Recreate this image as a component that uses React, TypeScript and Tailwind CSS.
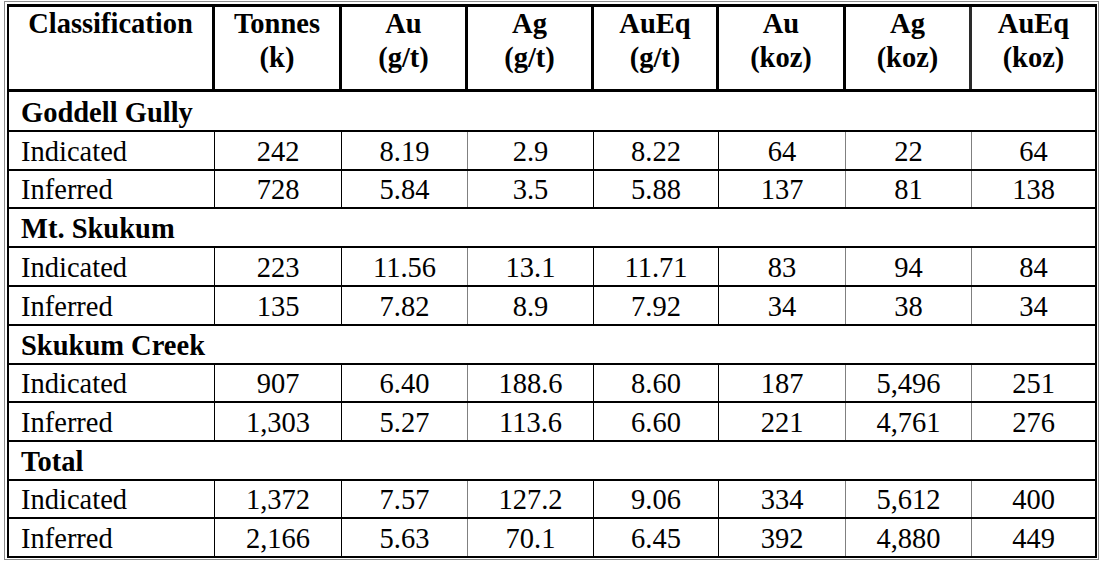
import React from "react";

const GRID = "grid grid-cols-[206px_127px_126px_126px_125px_127px_126px_123px]";

const headers: [string, string][] = [
  ["Classification", ""],
  ["Tonnes", "(k)"],
  ["Au", "(g/t)"],
  ["Ag", "(g/t)"],
  ["AuEq", "(g/t)"],
  ["Au", "(koz)"],
  ["Ag", "(koz)"],
  ["AuEq", "(koz)"],
];

const headerBorders = [
  "border-r-[3px] border-black",
  "border-r-[3px] border-black",
  "border-r-[3px] border-black",
  "border-r-[3px] border-black",
  "border-r-[3px] border-black",
  "border-r-[3px] border-black",
  "border-r-[3px] border-[#2a2a2a]",
  "",
];

const dataBorders = [
  "border-r border-black",
  "border-r border-black",
  "border-r border-[#808080]",
  "border-r border-black",
  "border-r border-black",
  "border-r border-[#808080]",
  "border-r border-[#808080]",
  "",
];

const sections = [
  {
    name: "Goddell Gully",
    rows: [
      ["Indicated", "242", "8.19", "2.9", "8.22", "64", "22", "64"],
      ["Inferred", "728", "5.84", "3.5", "5.88", "137", "81", "138"],
    ],
  },
  {
    name: "Mt. Skukum",
    rows: [
      ["Indicated", "223", "11.56", "13.1", "11.71", "83", "94", "84"],
      ["Inferred", "135", "7.82", "8.9", "7.92", "34", "38", "34"],
    ],
  },
  {
    name: "Skukum Creek",
    rows: [
      ["Indicated", "907", "6.40", "188.6", "8.60", "187", "5,496", "251"],
      ["Inferred", "1,303", "5.27", "113.6", "6.60", "221", "4,761", "276"],
    ],
  },
  {
    name: "Total",
    rows: [
      ["Indicated", "1,372", "7.57", "127.2", "9.06", "334", "5,612", "400"],
      ["Inferred", "2,166", "5.63", "70.1", "6.45", "392", "4,880", "449"],
    ],
  },
];

const heights = [
  "h-[38px]",
  "h-[39px]",
  "h-[38px]",
  "h-[39px]",
  "h-[39px]",
  "h-[39px]",
  "h-[39px]",
  "h-[38px]",
  "h-[39px]",
  "h-[39px]",
  "h-[38px]",
  "h-[39px]",
];

export default function App() {
  let idx = 0;
  const rows: React.ReactNode[] = [];
  sections.forEach((s) => {
    const i = idx++;
    rows.push(
      <div
        key={"s" + i}
        className={`${heights[i]} ${i === 0 ? "" : "border-t-2 border-black"} flex items-center overflow-hidden pl-[12px] pt-[3px] font-bold leading-[32px]`}
      >
        {s.name}
      </div>
    );
    s.rows.forEach((r) => {
      const j = idx++;
      rows.push(
        <div
          key={"r" + j}
          className={`${heights[j]} border-t-2 border-black ${GRID} grid-rows-[100%] overflow-hidden leading-[32px]`}
        >
          {r.map((c, k) => (
            <div
              key={k}
              className={`${dataBorders[k]} flex items-center pt-[2px] ${k === 0 ? "justify-start pl-[12px]" : "justify-center"}`}
            >
              {c}
            </div>
          ))}
        </div>
      );
    });
  });

  return (
    <div className="w-[1102px] h-[564px] bg-white overflow-hidden pt-[1px] pl-[4px] font-['Liberation_Serif','Times_New_Roman',serif]">
      <div className="w-[1095px] border border-[#8c8c8c] pt-[2px] pl-[2px] pr-[1px] pb-[1px] text-[28.5px] text-black">
        <div className="border-t-[3px] border-l-2 border-r-2 border-b-2 border-black">
          <div className={`${GRID} h-[85px] border-b-[3px] border-black`}>
            {headers.map(([a, b], k) => (
              <div
                key={k}
                className={`${headerBorders[k]} flex flex-col items-center font-bold leading-[34px]`}
              >
                <span>{a}</span>
                {b && <span>{b}</span>}
              </div>
            ))}
          </div>
          {rows}
        </div>
      </div>
    </div>
  );
}
